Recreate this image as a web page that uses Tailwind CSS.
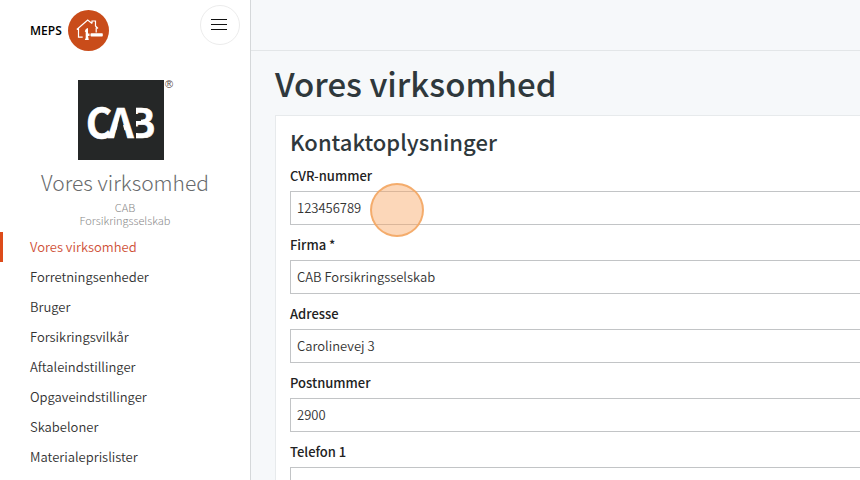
<!DOCTYPE html>
<html lang="da">
<head>
<meta charset="utf-8">
<meta name="viewport" content="width=device-width, initial-scale=1">
<title>MEPS – Vores virksomhed</title>
<script src="https://cdn.jsdelivr.net/npm/@tailwindcss/browser@4"></script>
</head>
<body class="flex h-screen overflow-hidden bg-[#f6f8fa] font-['Noto_Sans_CJK_SC','Open_Sans',sans-serif] text-[13px] leading-5 font-[350] text-[#333]">
  <aside class="w-[251px] shrink-0 overflow-hidden border-r border-[#d5d8da] bg-white">
    <header class="flex items-start justify-between pr-[10px] pl-[30px] pt-[5px]">
      <a href="#" class="mt-[5px] flex items-center gap-[6px] font-['Open_Sans',sans-serif] text-[12px] font-semibold text-black">
        MEPS
        <svg class="size-[41px]" viewBox="0 0 41 41" fill="none" aria-hidden="true">
          <circle cx="20.500" cy="20.500" r="20.500" fill="#c94c1a"/>
          <path d="M14.700 27.200h-4.200v-9M8.800 19.500L19.700 10l4.300 3.500M24 13.500v-2.500h3.500v5l2.500 2.500M28.200 17.500v5" stroke="#fff" stroke-width="1.200"/>
          <path d="M16.800 21.500c.5-2 1.500-3.200 3.200-3.500v5.500h1.500v2.500H20l.8 4h-4l.9-2v-6z" fill="#fff"/>
          <rect x="22.500" y="23.200" width="12.300" height="3.300" rx=".8" fill="#fff"/>
        </svg>
      </a>
      <button type="button" aria-label="Menu" class="flex size-10 items-center justify-center rounded-full border border-[#ececec] bg-white">
        <svg class="-ml-0.5 size-4" viewBox="0 0 16 16" stroke="#111" stroke-width="1" aria-hidden="true"><path d="M0 2.500h16M0 7.500h16M0 12.500h16"/></svg>
      </button>
    </header>
    <section class="flex flex-col items-center pt-[29px] text-center">
      <svg class="h-20 w-[100px]" viewBox="0 0 100 80" role="img" aria-label="CAB">
        <rect x="3" width="86" height="80" fill="#252727"/>
        <g fill="#fff" stroke="#fff" stroke-width=".6" font-family="'Noto Sans CJK SC',sans-serif" font-weight="700" font-size="40">
          <text x="53" y="58">B</text>
          <path d="M55 27h6v32h-6zM60 34h6v7h-6zM60 46.500h6v6.500h-6z" fill="#252727" stroke="none"/>
          <text x="11 33" y="58">CA</text>
        </g>
        <path d="M45.300 35L39 60h13z" fill="#252727"/>
        <text x="90" y="8" font-family="'Liberation Sans',sans-serif" font-size="11" fill="#5b4a45">®</text>
      </svg>
      <h2 class="mt-2 text-[21px] leading-7 font-light text-[#676a6c]">Vores virksomhed</h2>
      <p class="mt-[5px] text-[11px] leading-[13px] font-light text-[#888]">CAB<br>Forsikringsselskab</p>
    </section>
    <nav class="mt-[5px] flex flex-col leading-[30px]">
      <a href="#" aria-current="page" class="border-l-3 border-[#dd4b1a] pl-[27px] text-[#cf5138]">Vores virksomhed</a>
      <a href="#" class="pl-[30px]">Forretningsenheder</a>
      <a href="#" class="pl-[30px]">Bruger</a>
      <a href="#" class="pl-[30px]">Forsikringsvilkår</a>
      <a href="#" class="pl-[30px]">Aftaleindstillinger</a>
      <a href="#" class="pl-[30px]">Opgaveindstillinger</a>
      <a href="#" class="pl-[30px]">Skabeloner</a>
      <a href="#" class="pl-[30px]">Materialeprislister</a>
    </nav>
  </aside>
  <main class="min-w-0 flex-1 overflow-hidden">
    <div class="h-[51px] border-b border-[#e3e6e8]"></div>
    <div class="pl-6">
      <h1 class="pt-2 text-[33px] leading-[48px] font-medium text-[#2f383c]">Vores virksomhed</h1>
      <form class="mt-2 border-t border-l border-[#e7eaec] bg-white pl-[14px]">
        <h2 class="pt-[10px] text-[22px] leading-[30px] font-medium text-[#2f383c]">Kontaktoplysninger</h2>
        <div class="mt-[10px] flex flex-col gap-[10px] font-medium text-[#222]">
          <div class="relative flex flex-col gap-[5px]">
            <label for="cvr">CVR-nummer</label>
            <input id="cvr" value="123456789" class="h-[34px] border border-r-0 border-[#c2c4c6] bg-white px-[6px] pb-0.5 font-[350] text-[#333]">
            <span class="absolute top-[17px] left-20 size-[54px] rounded-full border-2 border-[#f3a764]/90 bg-[#f9a663]/45"></span>
          </div>
          <div class="flex flex-col gap-[5px]">
            <label for="firma">Firma *</label>
            <input id="firma" value="CAB Forsikringsselskab" class="h-[34px] border border-r-0 border-[#c2c4c6] bg-white px-[6px] pb-0.5 font-[350] text-[#333]">
          </div>
          <div class="flex flex-col gap-[5px]">
            <label for="adresse">Adresse</label>
            <input id="adresse" value="Carolinevej 3" class="h-[34px] border border-r-0 border-[#c2c4c6] bg-white px-[6px] pb-0.5 font-[350] text-[#333]">
          </div>
          <div class="flex flex-col gap-[5px]">
            <label for="postnummer">Postnummer</label>
            <input id="postnummer" value="2900" class="h-[34px] border border-r-0 border-[#c2c4c6] bg-white px-[6px] pb-0.5 font-[350] text-[#333]">
          </div>
          <div class="flex flex-col gap-[5px]">
            <label for="telefon">Telefon 1</label>
            <input id="telefon" type="tel" class="h-[34px] border border-r-0 border-[#c2c4c6] bg-white px-[6px] pb-0.5 font-[350] text-[#333]">
          </div>
        </div>
      </form>
    </div>
  </main>
</body>
</html>
